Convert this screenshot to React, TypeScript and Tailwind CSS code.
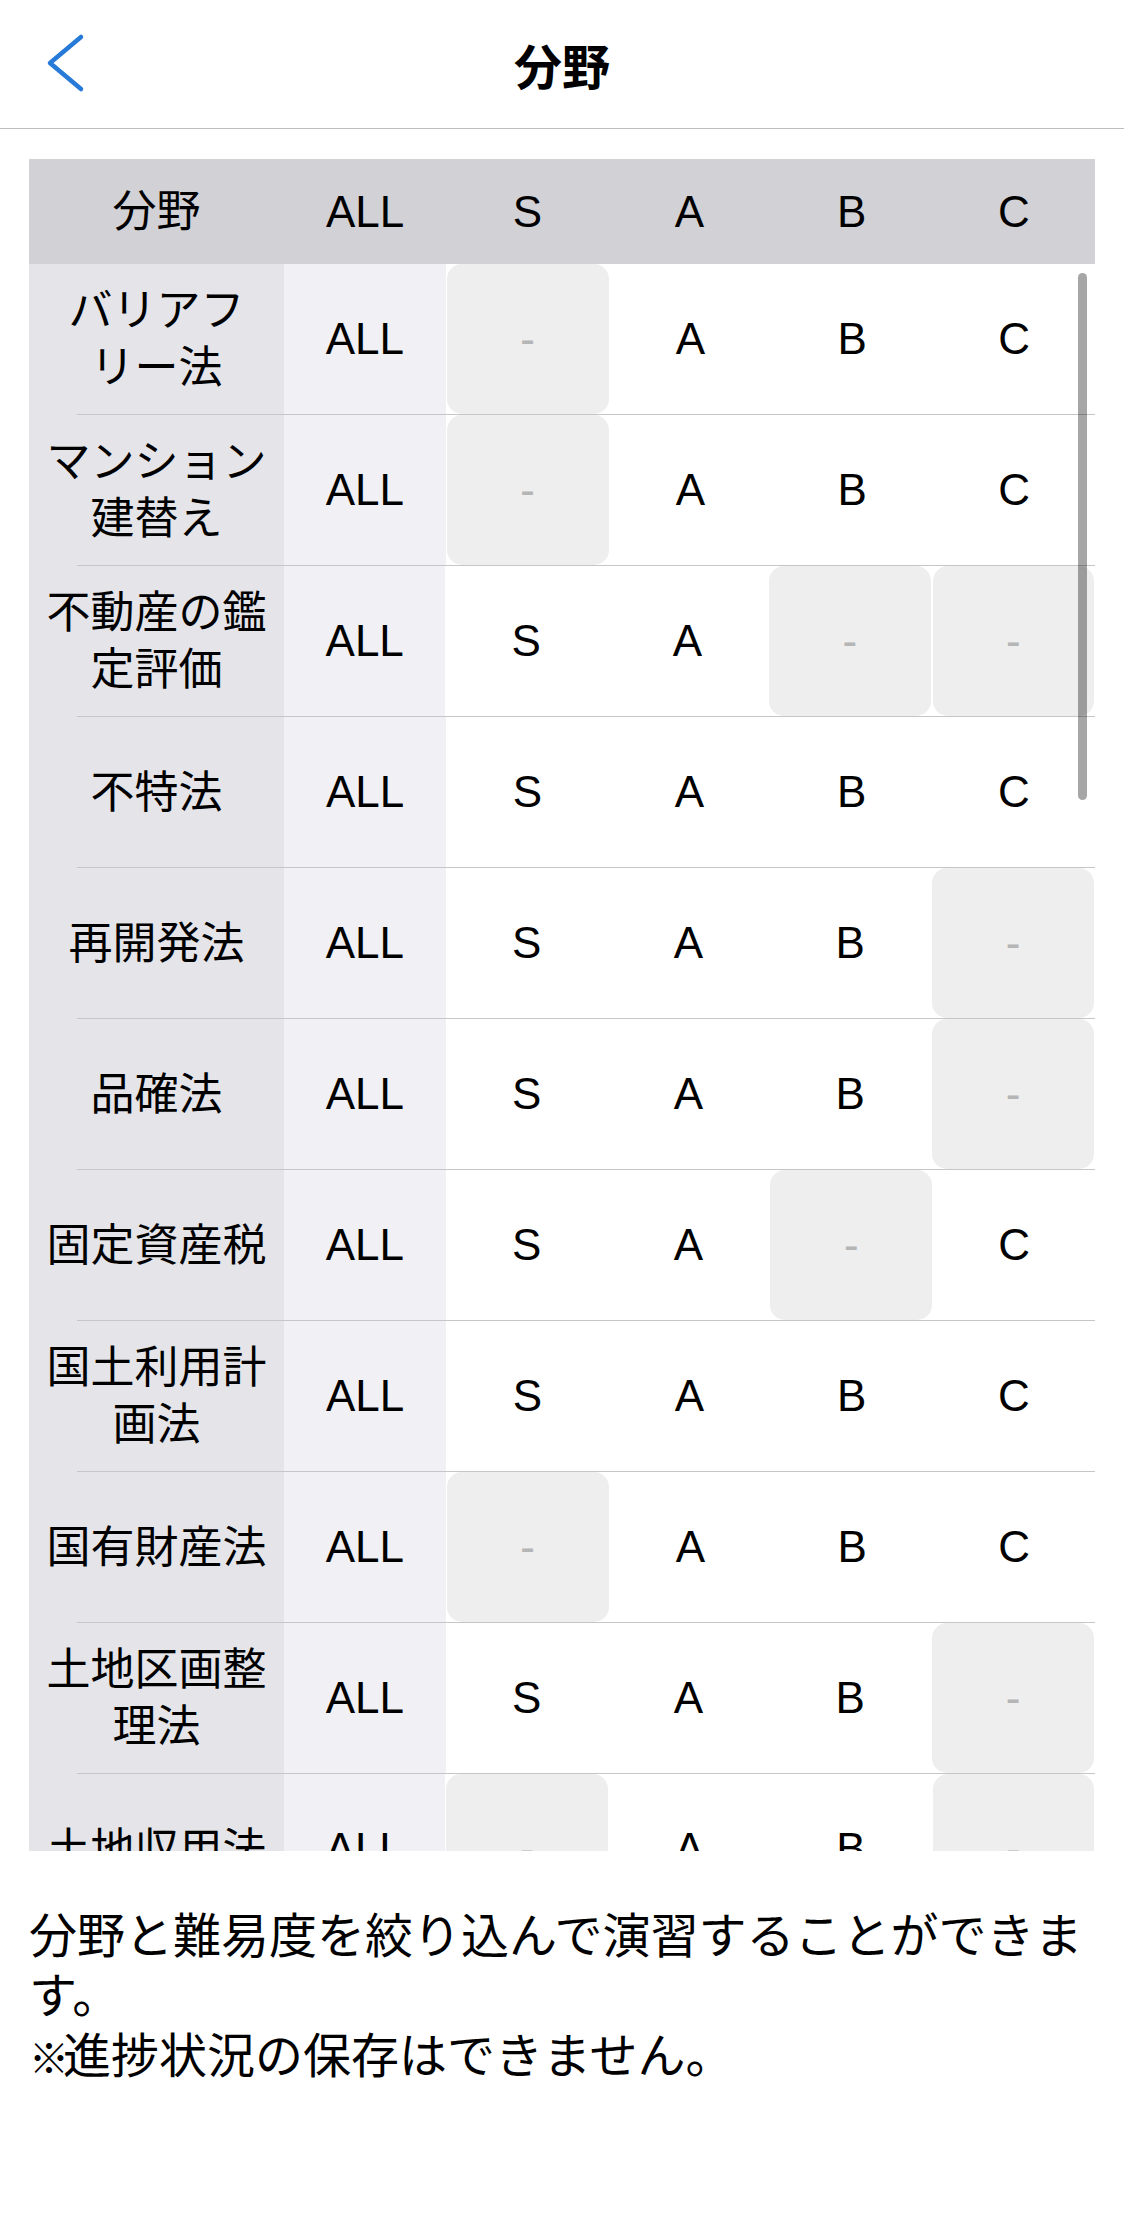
import React from 'react'

type Row = { name: string[]; s: boolean; a: boolean; b: boolean; c: boolean }

const rows: Row[] = [
  { name: ['バリアフ', 'リー法'], s: false, a: true, b: true, c: true },
  { name: ['マンション', '建替え'], s: false, a: true, b: true, c: true },
  { name: ['不動産の鑑', '定評価'], s: true, a: true, b: false, c: false },
  { name: ['不特法'], s: true, a: true, b: true, c: true },
  { name: ['再開発法'], s: true, a: true, b: true, c: false },
  { name: ['品確法'], s: true, a: true, b: true, c: false },
  { name: ['固定資産税'], s: true, a: true, b: false, c: true },
  { name: ['国土利用計', '画法'], s: true, a: true, b: true, c: true },
  { name: ['国有財産法'], s: false, a: true, b: true, c: true },
  { name: ['土地区画整', '理法'], s: true, a: true, b: true, c: false },
  { name: ['土地収用法'], s: false, a: true, b: true, c: false },
]

const font = { fontFamily: "'Liberation Sans', 'Noto Sans CJK JP', sans-serif" }

function Cell({ label, on }: { label: string; on: boolean }) {
  if (!on)
    return (
      <div className="flex-1 px-px">
        <div className="h-full rounded-[15px] bg-[#eeeeee] flex items-center justify-center text-[#b5b5b5]">-</div>
      </div>
    )
  return <div className="flex-1 flex items-center justify-center">{label}</div>
}

export default function App() {
  return (
    <div className="min-h-[2213px] bg-white text-black" style={font}>
      {/* nav */}
      <div className="relative h-[129px] border-b border-[#bdbdbd] flex items-center justify-center">
        <svg className="absolute left-[44px] top-[31px]" width="44" height="64" viewBox="0 0 44 64">
          <polyline points="37,6 6,32 37,58" fill="none" stroke="#287ad8" strokeWidth="4.5"
            strokeLinecap="round" strokeLinejoin="round" />
        </svg>
        <div className="text-[48px] font-bold leading-none" style={{ fontFamily: "'Noto Sans CJK JP', sans-serif" }}>分野</div>
      </div>

      {/* table */}
      <div className="relative mx-[29px] mt-[30px] h-[1692px] overflow-hidden text-[44px]">
        <div className="h-[105px] bg-[#d1d1d6] flex">
          <div className="w-[255px] flex items-center justify-center">分野</div>
          <div className="flex-1 flex items-center justify-center">ALL</div>
          <div className="flex-1 flex items-center justify-center">S</div>
          <div className="flex-1 flex items-center justify-center">A</div>
          <div className="flex-1 flex items-center justify-center">B</div>
          <div className="flex-1 flex items-center justify-center">C</div>
        </div>
        {rows.map((r, i) => (
          <div key={i}>
            <div className="h-[150px] flex">
              <div className="w-[255px] bg-[#e4e4e9] flex flex-col items-center justify-center leading-[57px]">
                {r.name.map((n) => <div key={n}>{n}</div>)}
              </div>
              <div className="flex-1 bg-[#f0f0f5] flex items-center justify-center">ALL</div>
              <Cell label="S" on={r.s} />
              <Cell label="A" on={r.a} />
              <Cell label="B" on={r.b} />
              <Cell label="C" on={r.c} />
            </div>
            <div className="h-px flex">
              <div className="w-[48px] bg-[#e4e4e9]" />
              <div className="flex-1 bg-[#c6c6c8]" />
            </div>
          </div>
        ))}
        {/* scroll indicator */}
        <div className="absolute right-[8px] top-[114px] w-[9px] h-[527px] rounded-full bg-black/35" />
      </div>

      <div className="mx-[29px] mt-[56px] text-[48px] leading-[60px]">
        <p>分野と難易度を絞り込んで演習することができます。</p>
        <p><span className="text-[40px] tracking-[-6px]">※</span>進捗状況の保存はできません。</p>
      </div>
    </div>
  )
}
